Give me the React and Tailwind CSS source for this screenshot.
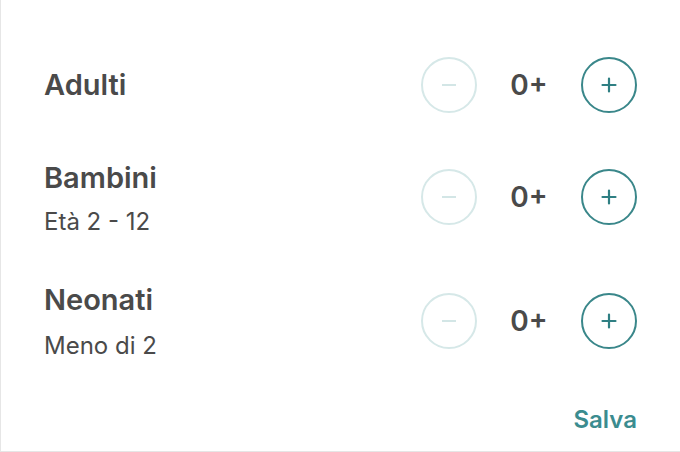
import React from "react";

function Minus() {
  return (
    <div className="w-14 h-14 rounded-full border-2 border-[#d6e8e8] flex items-center justify-center">
      <div className="w-[14px] h-[2px] bg-[#d3e6e6]" />
    </div>
  );
}
function Plus() {
  return (
    <div className="w-14 h-14 rounded-full border-2 border-[#3a878a] flex items-center justify-center">
      <svg width="16" height="16" viewBox="0 0 16 16">
        <path d="M8 1.5v13M1.5 8h13" stroke="#2f7f83" strokeWidth="2.2" strokeLinecap="round" />
      </svg>
    </div>
  );
}
function Controls() {
  return (
    <div className="flex items-center">
      <Minus />
      <div className="w-[104px] text-center text-[28px] font-semibold text-[#4a4a4a] leading-8">0+</div>
      <Plus />
    </div>
  );
}

export default function App() {
  return (
    <div
      className="w-[680px] h-[452px] bg-white border-l border-b border-[#e6e6e6] pl-[43px] pr-[43px] flex flex-col"
      style={{ fontFamily: "Inter, 'Noto Sans', sans-serif" }}
    >
      <div className="mt-[30px] h-[110px] flex items-center justify-between">
        <div className="text-[29px] font-semibold text-[#4a4a4a] leading-[34px]">Adulti</div>
        <Controls />
      </div>
      <div className="h-[114px] flex items-center justify-between">
        <div className="flex flex-col gap-[12px] mt-[4px]">
          <div className="text-[29px] font-semibold text-[#4a4a4a] leading-[34px]">Bambini</div>
          <div className="text-[24px] text-[#4a4a4a] leading-[30px]">Età 2 - 12</div>
        </div>
        <Controls />
      </div>
      <div className="h-[134px] flex items-center justify-between">
        <div className="flex flex-col gap-[14px] mt-[2px]">
          <div className="text-[29px] font-semibold text-[#4a4a4a] leading-[34px]">Neonati</div>
          <div className="text-[24px] text-[#4a4a4a] leading-[30px]">Meno di 2</div>
        </div>
        <Controls />
      </div>
      <div className="mt-[18px] flex justify-end">
        <div className="text-[24px] font-semibold text-[#3b8c8f] leading-7">Salva</div>
      </div>
    </div>
  );
}
